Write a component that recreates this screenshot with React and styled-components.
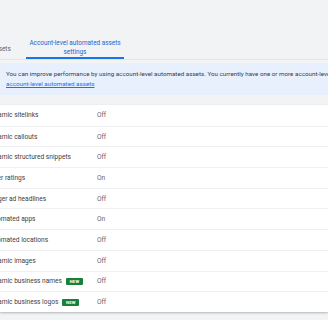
import React from "react";
import styled, { createGlobalStyle } from "styled-components";

const Global = createGlobalStyle`
  html, body { margin: 0; padding: 0; background: #f1f3f4; }
  body { font-family: Roboto, "Liberation Sans", sans-serif; }
`;

const Page = styled.div`
  width: 328px;
  height: 320px;
  overflow: hidden;
  background: #f1f3f4;
  display: flex;
  flex-direction: column;
`;

const TabBar = styled.div`
  display: flex;
  align-items: flex-end;
  gap: 12px;
  padding-top: 39px;
  margin-left: -12px;
  border-bottom: 1px solid #e3e5e8;
  height: 20px;
`;

const Tab = styled.div`
  display: flex;
  flex-direction: column;
  align-items: center;
  justify-content: flex-end;
  height: 100%;
  width: ${(p) => p.$w}px;
  font-size: 6.4px;
  line-height: 8.5px;
  text-align: center;
  white-space: nowrap;
  color: ${(p) => (p.$active ? "#1967d2" : "#5f6368")};
  border-bottom: 2px solid ${(p) => (p.$active ? "#1a73e8" : "transparent")};
  box-sizing: border-box;
  padding-bottom: ${(p) => (p.$active ? "1px" : "4px")};
`;

const Banner = styled.div`
  margin-top: 3px;
  background: #e8f0fe;
  padding: 7px 6px 6px;
  font-size: 6.25px;
  line-height: 9.5px;
  color: #3c4043;
  white-space: nowrap;
`;

const Link = styled.a`
  color: #1a73e8;
  text-decoration: underline;
`;

const Table = styled.div`
  margin-top: 10px;
  background: #ffffff;
  box-shadow: 0 1px 2px rgba(60, 64, 67, 0.35);
`;

const Row = styled.div`
  display: flex;
  align-items: center;
  height: 20.7px;
  box-sizing: border-box;
  border-top: ${(p) => (p.$first ? "none" : "1px solid #eeeff1")};
  margin-left: -13px;
  font-size: 6.6px;
`;

const Label = styled.div`
  width: 110px;
  display: flex;
  align-items: center;
  gap: 4px;
  color: #3c4043;
  white-space: nowrap;
`;

const Value = styled.div`
  color: #5f6368;
`;

const Badge = styled.span`
  display: inline-flex;
  align-items: center;
  justify-content: center;
  width: 17px;
  height: 7px;
  border-radius: 1px;
  background: #188038;
  color: #ffffff;
  font-size: 4.2px;
  font-weight: 700;
  letter-spacing: 0.2px;
`;

const rows = [
  ["Dynamic sitelinks", "Off"],
  ["Dynamic callouts", "Off"],
  ["Dynamic structured snippets", "Off"],
  ["Seller ratings", "On"],
  ["Longer ad headlines", "Off"],
  ["Automated apps", "On"],
  ["Automated locations", "Off"],
  ["Dynamic images", "Off"],
  ["Dynamic business names", "Off", true],
  ["Dynamic business logos", "Off", true],
];

export default function App() {
  return (
    <>
      <Global />
      <Page>
        <TabBar>
          <Tab $w={26}>Assets</Tab>
          <Tab $w={98} $active>
            Account-level automated assets
            <br />
            settings
          </Tab>
        </TabBar>
        <Banner>
          <div>
            You can improve performance by using account-level automated assets. You currently have one or more account-level automated assets turned off. Turn on
          </div>
          <div>
            <Link>account-level automated assets</Link>
          </div>
        </Banner>
        <Table>
          {rows.map(([label, value, isNew], i) => (
            <Row key={label} $first={i === 0}>
              <Label>
                {label}
                {isNew && <Badge>NEW</Badge>}
              </Label>
              <Value>{value}</Value>
            </Row>
          ))}
        </Table>
      </Page>
    </>
  );
}
